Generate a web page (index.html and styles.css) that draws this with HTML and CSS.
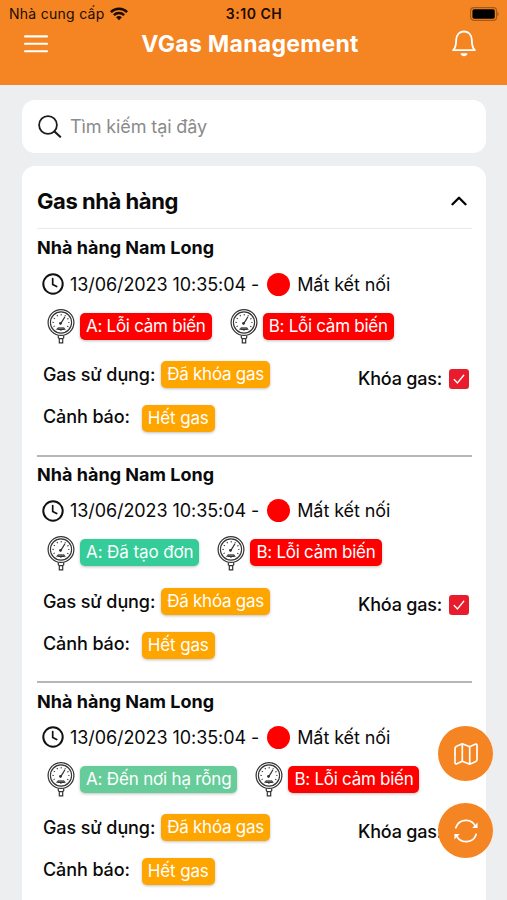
FILE: index.html
```html
<!DOCTYPE html>
<html lang="vi">
<head>
<meta charset="utf-8">
<title>VGas Management</title>
<link rel="stylesheet" href="styles.css">
</head>
<body>
<svg class="defs" width="0" height="0" aria-hidden="true">
  <symbol id="gauge" viewBox="0 0 28 36">
    <g fill="none" stroke="#333">
      <circle cx="14" cy="14.5" r="12.9" stroke-width="1.2"/>
      <circle cx="14" cy="14.5" r="10.6" stroke-width="1.1"/>
      <circle cx="14" cy="14.5" r="7.8" stroke-width="1.5" stroke-dasharray="1 3.08" stroke-dashoffset=".5"/>
      <path d="M13.2 16.500L17.800 9" stroke-width="1.300"/>
      <circle cx="13.500" cy="15.300" r="1.400" fill="#333" stroke="none"/>
      <path d="M10.800 19.900h6.400v1.600h-6.400z" fill="#888" stroke-width="1"/>
      <path d="M11.300 27.500v2.300l1 .9h3.400l1-.9v-2.300M12.300 30.700v4.200h3.400v-4.200" stroke-width="1.200"/>
    </g>
  </symbol>
  <symbol id="clock" viewBox="0 0 22 22">
    <circle cx="11" cy="11" r="9.7" fill="none" stroke="#111" stroke-width="2"/>
    <path d="M10.700 5.600v5.900l4 2.100" fill="none" stroke="#111" stroke-width="1.700" stroke-linecap="round" stroke-linejoin="round"/>
  </symbol>
  <symbol id="check" viewBox="0 0 20 20">
    <path d="M5.200 10.400l3.300 3.500 6.200-7.600" fill="none" stroke="#fff" stroke-width="1.400" stroke-linecap="round" stroke-linejoin="round"/>
  </symbol>
</svg>

<header class="header">
  <div class="status">
    <div class="carrier"><span>Nhà cung cấp</span>
      <svg width="18" height="14" viewBox="0 0 18 14"><g fill="none" stroke="#1a0c00" stroke-width="2.500"><path d="M.9 5.100a11.600 11.600 0 0 1 16.200 0"/><path d="M3.900 8.200a7.300 7.300 0 0 1 10.200 0"/></g><path d="M9 13.200L6.100 10.300a4.200 4.200 0 0 1 5.800 0z" fill="#1a0c00"/></svg>
    </div>
    <span class="time">3:10 CH</span>
    <svg class="battery" width="31" height="14" viewBox="0 0 31 14"><rect x="2.600" y=".6" width="26" height="12.800" rx="3.400" fill="none" stroke="#a65a1a" stroke-width="1.200"/><rect x="4.400" y="2.200" width="22.400" height="9.600" rx="1.800" fill="#000"/><path d="M29.400 4.800c1.700.8 1.700 3.600 0 4.400z" fill="#a65a1a"/></svg>
  </div>
  <div class="nav">
    <svg width="24" height="18" viewBox="0 0 24 18"><path d="M1 1.400h22M1 8.800h22M1 16.200h22" stroke="#fff" stroke-width="2.100" stroke-linecap="round"/></svg>
    <h1>VGas Management</h1>
    <svg width="24" height="28" viewBox="0 0 24 28"><path d="M1.200 20.200c1.800-1.700 2.500-3.400 2.700-6.100l.3-4.500C4.600 4.700 7.700 1.500 12 1.500s7.400 3.200 7.800 8.100l.3 4.500c.2 2.700.9 4.400 2.700 6.100z" fill="none" stroke="#fff" stroke-width="1.800" stroke-linejoin="round"/><path d="M8.500 23.200h7c-.4 1.900-1.600 3-3.500 3s-3.100-1.100-3.500-3z" fill="#fff"/></svg>
  </div>
</header>

<main class="content">
  <label class="search">
    <svg width="24" height="24" viewBox="0 0 24 24"><circle cx="10" cy="10" r="8.900" fill="none" stroke="#1c1c1e" stroke-width="1.800"/><path d="M16.500 16.500l5.700 5.200" stroke="#1c1c1e" stroke-width="2.200" stroke-linecap="round"/></svg>
    <span>Tìm kiếm tại đây</span>
  </label>

  <section class="card">
    <div class="card-head">
      <h2>Gas nhà hàng</h2>
      <svg width="16" height="10" viewBox="0 0 16 10"><path d="M1.500 8.300L8 1.800l6.500 6.500" fill="none" stroke="#000" stroke-width="2.300" stroke-linecap="round" stroke-linejoin="round"/></svg>
    </div>

    <article class="record">
      <h3>Nhà hàng Nam Long</h3>
      <div class="stamp"><svg width="22" height="22"><use href="#clock"/></svg><span class="date">13/06/2023 10:35:04 -</span><i class="dot"></i><span class="state">Mất kết nối</span></div>
      <div class="sensors">
        <div class="sensor"><svg width="28" height="36"><use href="#gauge"/></svg><span class="badge red">A: Lỗi cảm biến</span></div>
        <div class="sensor"><svg width="28" height="36"><use href="#gauge"/></svg><span class="badge red">B: Lỗi cảm biến</span></div>
      </div>
      <div class="usage"><span class="label">Gas sử dụng:</span><span class="badge amber">Đã khóa gas</span><div class="lock"><span class="label">Khóa gas:</span><svg class="box" width="20" height="20"><use href="#check"/></svg></div></div>
      <div class="alert"><span class="label">Cảnh báo:</span><span class="badge amber">Hết gas</span></div>
    </article>

    <article class="record">
      <h3>Nhà hàng Nam Long</h3>
      <div class="stamp"><svg width="22" height="22"><use href="#clock"/></svg><span class="date">13/06/2023 10:35:04 -</span><i class="dot"></i><span class="state">Mất kết nối</span></div>
      <div class="sensors">
        <div class="sensor"><svg width="28" height="36"><use href="#gauge"/></svg><span class="badge green">A: Đã tạo đơn</span></div>
        <div class="sensor"><svg width="28" height="36"><use href="#gauge"/></svg><span class="badge red">B: Lỗi cảm biến</span></div>
      </div>
      <div class="usage"><span class="label">Gas sử dụng:</span><span class="badge amber">Đã khóa gas</span><div class="lock"><span class="label">Khóa gas:</span><svg class="box" width="20" height="20"><use href="#check"/></svg></div></div>
      <div class="alert"><span class="label">Cảnh báo:</span><span class="badge amber">Hết gas</span></div>
    </article>

    <article class="record">
      <h3>Nhà hàng Nam Long</h3>
      <div class="stamp"><svg width="22" height="22"><use href="#clock"/></svg><span class="date">13/06/2023 10:35:04 -</span><i class="dot"></i><span class="state">Mất kết nối</span></div>
      <div class="sensors">
        <div class="sensor"><svg width="28" height="36"><use href="#gauge"/></svg><span class="badge mint">A: Đến nơi hạ rỗng</span></div>
        <div class="sensor"><svg width="28" height="36"><use href="#gauge"/></svg><span class="badge red">B: Lỗi cảm biến</span></div>
      </div>
      <div class="usage"><span class="label">Gas sử dụng:</span><span class="badge amber">Đã khóa gas</span><div class="lock"><span class="label">Khóa gas:</span><svg class="box" width="20" height="20"><use href="#check"/></svg></div></div>
      <div class="alert"><span class="label">Cảnh báo:</span><span class="badge amber">Hết gas</span></div>
    </article>
  </section>
</main>

<div class="fabs">
  <div class="fab"><svg width="24" height="24" viewBox="0 0 24 24"><path d="M8.300 1.800L2.600 4.300Q1 5 1 6.800v13.700q0 2 1.900 1.200l5.400-2.500 7.400 3 5.700-2.500q1.600-.7 1.600-2.500V3.500q0-2-1.900-1.200l-5.400 2.500zM8.300 1.800v17.400M15.700 4.800v17.400" fill="none" stroke="#fff" stroke-width="1.700" stroke-linejoin="round"/></svg></div>
  <div class="fab"><svg width="26" height="26" viewBox="0 0 26 26"><g fill="none" stroke="#fff" stroke-width="1.700" stroke-linecap="round"><path d="M2.800 9.800A10.600 10.600 0 0 1 22.600 8.600"/><path d="M23.200 16.200A10.600 10.600 0 0 1 3.400 17.400"/></g><path d="M24.600 4.600v5.400h-5.400zM1.400 21.400v-5.400h5.400z" fill="#fff"/></svg></div>
</div>
</body>
</html>
```

FILE: styles.css
```css
* { box-sizing: border-box; }

body {
  margin: 0;
  height: 900px;
  overflow: hidden;
  background: #eceef0;
  font-family: Inter, "Noto Sans", sans-serif;
  color: #0a0a0a;
}

svg { display: block; flex: none; }
.defs { position: absolute; }
h1, h2, h3 { margin: 0; }
span, h1, h2, h3 { white-space: nowrap; }

.header { height: 85px; background: #f58423; }

.status {
  display: grid;
  grid-template-columns: 1fr auto 1fr;
  align-items: center;
  height: 27px;
  padding: 0 8px 0 9px;
  font-size: 14px;
  color: #1a0c00;
}
.carrier { display: flex; align-items: center; gap: 5px; letter-spacing: .27px; }
.time { font-weight: 600; letter-spacing: .5px; }
.battery { justify-self: end; }

.nav {
  display: flex;
  align-items: center;
  justify-content: space-between;
  height: 33px;
  padding: 0 31px 0 24px;
  color: #fff;
}
.nav h1 { font-size: 23px; font-weight: 700; line-height: 30px; letter-spacing: .27px; }

.content { padding: 15px 21px 0 22px; }

.search {
  display: flex;
  align-items: center;
  gap: 8px;
  height: 53px;
  padding-left: 16px;
  border-radius: 13px;
  background: #fff;
  font-size: 18px;
  letter-spacing: -.12px;
  color: #8b8b8b;
}

.card {
  height: 760px;
  margin-top: 13px;
  padding: 0 14px 0 15px;
  border-radius: 13px;
  background: #fff;
}
.card-head {
  display: flex;
  align-items: center;
  justify-content: space-between;
  height: 63px;
  padding: 7px 5px 0 0;
  border-bottom: 1px solid #e8e9eb;
}
.card-head h2 { font-size: 22px; font-weight: 650; letter-spacing: -.45px; }

.record {
  display: grid;
  grid-template-rows: 37px 36px 48px 49px 39px;
  height: 227.5px;
  border-bottom: 2px solid #b5b6b7;
}
.record + .record { height: 226.5px; grid-template-rows: 36px 36px 48px 49px 39px; }
.record > * { display: flex; align-items: center; }
.record h3 { font-size: 18px; font-weight: 650; letter-spacing: .02px; }

.stamp { padding-left: 5px; font-size: 18px; letter-spacing: -.08px; }
.date { margin-left: 6px; }
.dot { width: 23px; height: 23px; margin: 0 7px 0 8px; border-radius: 50%; background: #f00; }

.sensors { gap: 18px; padding-left: 10px; }
.sensor { display: flex; align-items: center; gap: 5px; }

.badge {
  height: 27px;
  padding: 0 6px;
  border-radius: 5px;
  box-shadow: 0 1px 3px rgba(0, 0, 0, .25);
  color: #fff;
  font-size: 17px;
  line-height: 26px;
  letter-spacing: -.27px;
}
.red { background: #f00; }
.amber { background: #ffa500; }
.green { background: #34cc98; letter-spacing: -.1px; }
.mint { background: #66cc99; letter-spacing: -.18px; }

.label { font-size: 18px; font-weight: 500; letter-spacing: -.1px; }
.usage { padding-left: 6px; }
.usage > .badge { margin-left: 6px; }
.lock { display: flex; align-items: center; gap: 7px; margin-left: auto; padding: 8px 3px 0 0; }
.lock .label { padding-bottom: 1px; letter-spacing: -.2px; }
.box { border-radius: 3px; background: #e81c2c; }
.alert { padding-left: 6px; }
.alert .label { padding-bottom: 4px; }
.alert .badge { margin-left: 12px; letter-spacing: -.15px; }

.fabs {
  position: fixed;
  top: 726px;
  right: 14px;
  display: grid;
  gap: 22px;
}
.fab {
  display: flex;
  align-items: center;
  justify-content: center;
  width: 55px;
  height: 55px;
  border-radius: 50%;
  background: #f58423;
}
```
